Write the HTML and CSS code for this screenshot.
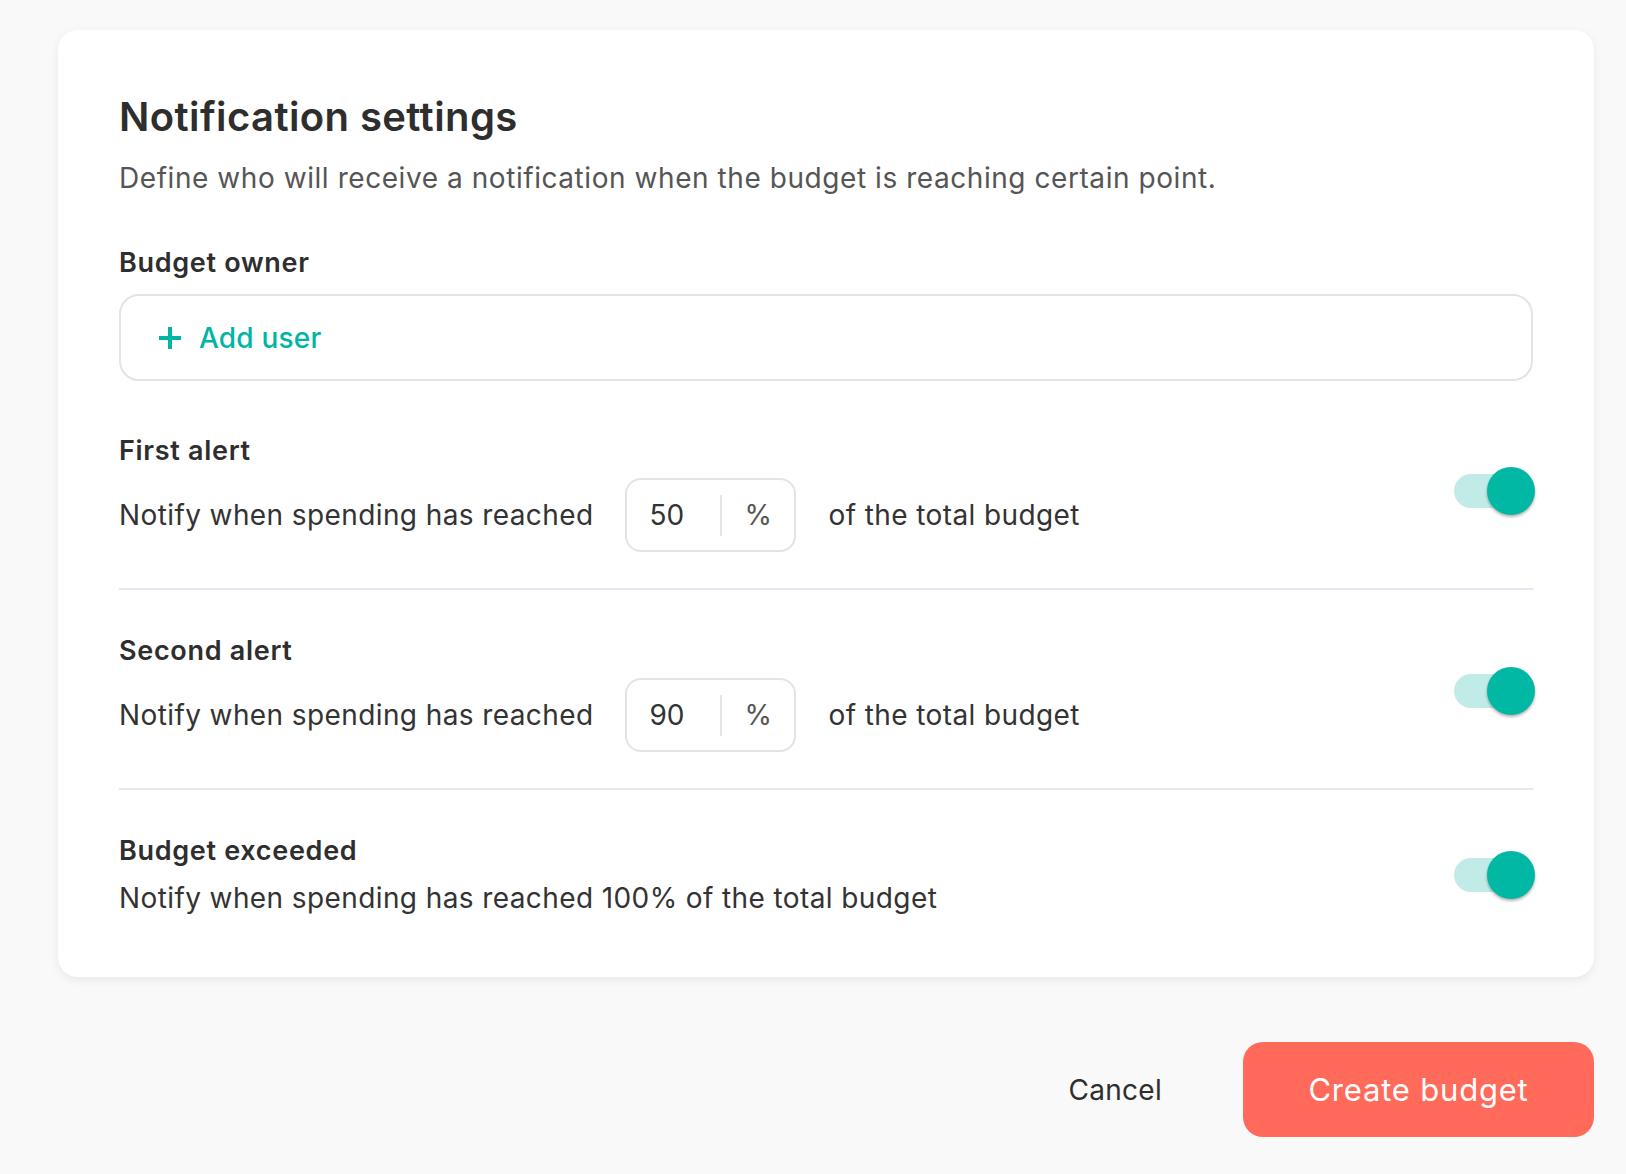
FILE: index.html
```html
<!DOCTYPE html>
<html lang="en">
<head>
  <meta charset="UTF-8">
  <meta name="viewport" content="width=device-width, initial-scale=1.0">
  <title>Notification settings</title>
  <link rel="stylesheet" href="styles.css">
</head>
<body>
  <div class="page">

    <div class="settings-card">
      <h2 class="card-title">Notification settings</h2>
      <p class="card-subtitle">Define who will receive a notification when the budget is reaching certain point.</p>

      <div class="field-label owner-label">Budget owner</div>
      <div class="user-picker">
        <button class="add-user-btn" type="button">
          <svg class="plus-icon" width="24" height="24" viewBox="0 0 24 24">
            <path d="M12 1v22M1 12h22" stroke="currentColor" stroke-width="4" fill="none"/>
          </svg>
          Add user
        </button>
      </div>

      <div class="alert-section first">
        <div class="alert-info">
          <div class="field-label">First alert</div>
          <div class="alert-row">
            <span>Notify when spending has reached</span>
            <div class="percent-input">
              <input type="text" value="50">
              <span class="percent-divider"></span>
              <span class="percent-unit">%</span>
            </div>
            <span>of the total budget</span>
          </div>
        </div>
        <label class="toggle">
          <input type="checkbox" checked>
          <span class="toggle-track"></span>
          <span class="toggle-knob"></span>
        </label>
      </div>

      <div class="alert-section">
        <div class="alert-info">
          <div class="field-label">Second alert</div>
          <div class="alert-row">
            <span>Notify when spending has reached</span>
            <div class="percent-input">
              <input type="text" value="90">
              <span class="percent-divider"></span>
              <span class="percent-unit">%</span>
            </div>
            <span>of the total budget</span>
          </div>
        </div>
        <label class="toggle">
          <input type="checkbox" checked>
          <span class="toggle-track"></span>
          <span class="toggle-knob"></span>
        </label>
      </div>

      <div class="alert-section last">
        <div class="alert-info">
          <div class="field-label">Budget exceeded</div>
          <div class="alert-text">Notify when spending has reached 100% of the total budget</div>
        </div>
        <label class="toggle">
          <input type="checkbox" checked>
          <span class="toggle-track"></span>
          <span class="toggle-knob"></span>
        </label>
      </div>
    </div>

    <div class="form-actions">
      <button class="cancel-btn" type="button">Cancel</button>
      <button class="create-btn" type="button">Create budget</button>
    </div>

  </div>
</body>
</html>
```

FILE: styles.css
```css
body {
  margin: 0;
  background: #f9f9f9;
  font-family: Inter, "Noto Sans", sans-serif;
  color: #2e2e2e;
}

.page {
  padding: 30px 32px 37px 58px;
}

.settings-card {
  background: #fff;
  border-radius: 20px;
  box-shadow: 0 3px 10px rgba(0, 0, 0, 0.07);
  padding: 63px 61px 25px;
}

.card-title {
  margin: 0;
  font-size: 40px;
  font-weight: 600;
  line-height: 48px;
  letter-spacing: 0.4px;
}

.card-subtitle {
  margin: 19px 0 0;
  font-size: 28px;
  line-height: 36px;
  color: #555;
  letter-spacing: 0.56px;
}

.field-label {
  font-size: 27px;
  font-weight: 600;
  line-height: 36px;
  letter-spacing: 0.7px;
}

.owner-label {
  margin-top: 49px;
}

.user-picker {
  display: flex;
  align-items: center;
  box-sizing: border-box;
  height: 87px;
  margin-top: 13px;
  padding: 0 37px;
  border: 2px solid #e4e4e4;
  border-radius: 20px;
}

.add-user-btn {
  display: flex;
  align-items: center;
  gap: 17px;
  padding: 0;
  background: none;
  border: none;
  color: #00b5a3;
  font-family: inherit;
  font-size: 28px;
  font-weight: 500;
  letter-spacing: 0.2px;
  cursor: pointer;
}

/* alert rows */
.alert-section {
  display: flex;
  align-items: center;
  justify-content: space-between;
  padding: 43px 0 36px;
  border-bottom: 2px solid #e4e8f1;
}

.alert-section.first {
  margin-top: 9px;
}

.alert-section.last {
  border-bottom: none;
}

.alert-section .toggle {
  margin-bottom: 4px;
}

.alert-section.last .toggle {
  margin-bottom: 0;
}

.alert-row {
  display: flex;
  align-items: center;
  gap: 32px;
  margin-top: 9px;
  font-size: 28px;
  line-height: 36px;
  letter-spacing: 0.4px;
  color: #333;
}

.alert-text {
  margin-top: 11px;
  font-size: 28px;
  line-height: 36px;
  letter-spacing: 0.4px;
  color: #333;
}

.percent-input {
  display: flex;
  align-items: center;
  box-sizing: border-box;
  width: 171px;
  height: 74px;
  border: 2px solid #e4e4e4;
  border-radius: 16px;
}

.percent-input input {
  box-sizing: border-box;
  width: 93px;
  padding: 0 0 0 22px;
  border: none;
  outline: none;
  background: transparent;
  font: inherit;
  color: #333;
}

.percent-divider {
  width: 2px;
  height: 41px;
  background: #e6e6e6;
}

.percent-unit {
  flex: 1;
  text-align: center;
  color: #555;
}

/* switch */
.toggle {
  position: relative;
  flex-shrink: 0;
  width: 81px;
  height: 48px;
  margin-right: -2px;
  cursor: pointer;
}

.toggle input {
  display: none;
}

.toggle-track {
  position: absolute;
  left: 0;
  top: 7px;
  width: 70px;
  height: 34px;
  border-radius: 17px;
  background: #c0ebe6;
}

.toggle-knob {
  position: absolute;
  right: 0;
  top: 0;
  width: 48px;
  height: 48px;
  border-radius: 50%;
  background: #00b8a4;
  box-shadow: 0 2px 3px rgba(0, 0, 0, 0.3);
}

/* footer buttons */
.form-actions {
  display: flex;
  justify-content: flex-end;
  align-items: center;
  margin-top: 65px;
}

.cancel-btn {
  margin-right: 81px;
  padding: 0;
  background: none;
  border: none;
  font-family: inherit;
  font-size: 28px;
  letter-spacing: 0.3px;
  color: #2e2e2e;
  cursor: pointer;
}

.create-btn {
  width: 351px;
  height: 95px;
  border: none;
  border-radius: 20px;
  background: #ff6a5b;
  color: #fff;
  font-family: inherit;
  font-size: 31px;
  letter-spacing: 0.8px;
  cursor: pointer;
}
```
